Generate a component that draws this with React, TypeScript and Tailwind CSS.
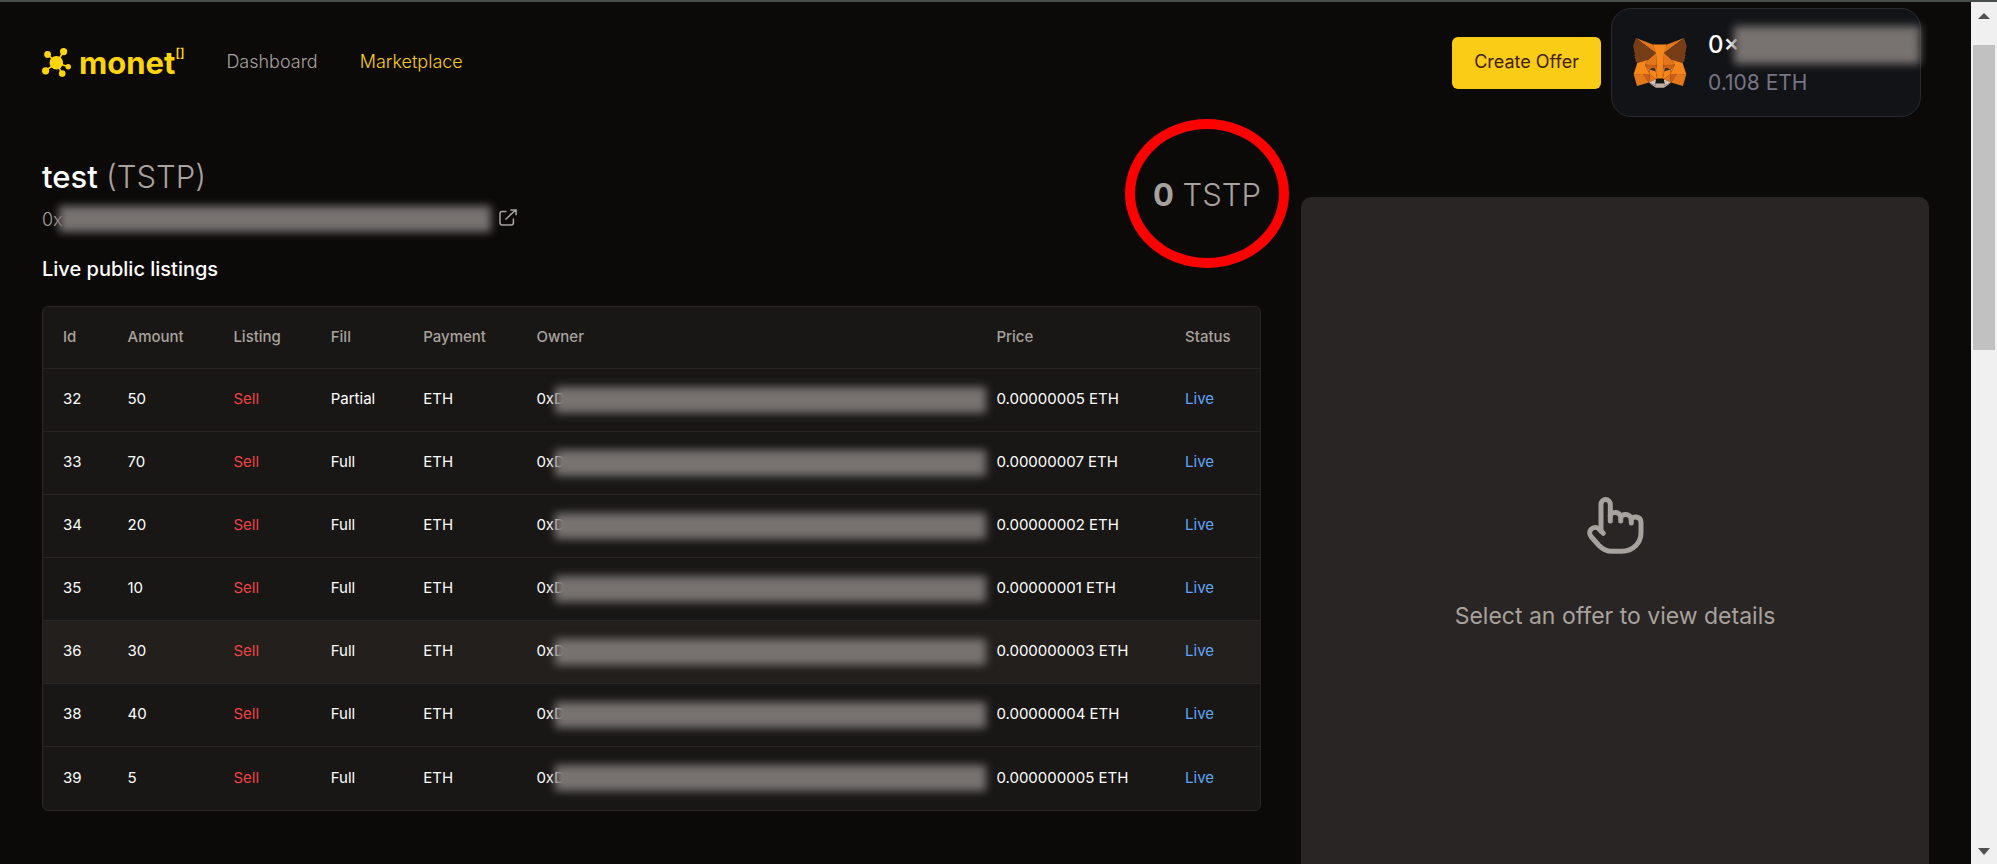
import React from "react";

type Offer = {
  id: number;
  amount: number;
  fill: "Partial" | "Full";
  price: string;
  active?: boolean;
};

const offers: Offer[] = [
  { id: 32, amount: 50, fill: "Partial", price: "0.00000005 ETH" },
  { id: 33, amount: 70, fill: "Full", price: "0.00000007 ETH" },
  { id: 34, amount: 20, fill: "Full", price: "0.00000002 ETH" },
  { id: 35, amount: 10, fill: "Full", price: "0.00000001 ETH" },
  { id: 36, amount: 30, fill: "Full", price: "0.000000003 ETH", active: true },
  { id: 38, amount: 40, fill: "Full", price: "0.00000004 ETH" },
  { id: 39, amount: 5, fill: "Full", price: "0.000000005 ETH" },
];

const foxShapes: [string, string][] = [
  ["#e2761b", "274.1 35.5 174.6 109.4 193 65.8"],
  ["#e4761b", "44.4 35.5 143.1 110.1 125.6 65.8"],
  ["#e4761b", "238.3 206.8 211.8 247.4 268.5 263 284.8 207.7"],
  ["#e4761b", "33.9 207.7 50.1 263 106.8 247.4 80.3 206.8"],
  ["#e4761b", "103.6 138.2 87.8 162.1 144.1 164.6 142.1 104.1"],
  ["#e4761b", "214.9 138.2 175.9 103.4 174.6 164.6 230.8 162.1"],
  ["#e4761b", "106.8 247.4 140.6 230.9 111.4 208.1"],
  ["#e4761b", "177.9 230.9 211.8 247.4 207.1 208.1"],
  ["#d7c1b3", "211.8 247.4 177.9 230.9 180.6 253 180.3 262.3"],
  ["#d7c1b3", "106.8 247.4 138.3 262.3 138.1 253 140.6 230.9"],
  ["#cd6116", "106.8 247.4 111.6 206.8 80.3 207.7"],
  ["#cd6116", "207 206.8 211.8 247.4 238.3 207.7"],
  ["#cd6116", "230.8 162.1 174.6 164.6 179.8 193.5 188.1 176.1 208.1 185.2"],
  ["#cd6116", "110.6 185.2 130.6 176.1 138.8 193.5 144.1 164.6 87.8 162.1"],
  ["#233447", "138.8 193.5 110.6 185.2 130.5 176.1"],
  ["#233447", "179.7 193.5 188 176.1 208 185.2"],
  ["#e4751f", "87.8 162.1 111.4 208.1 110.6 185.2"],
  ["#e4751f", "208.1 185.2 207.1 208.1 230.8 162.1"],
  ["#e4751f", "144.1 164.6 138.8 193.5 145.4 227.6 146.9 182.7"],
  ["#e4751f", "174.6 164.6 171.9 182.6 173.1 227.6 179.8 193.5"],
  ["#f6851b", "179.8 193.5 173.1 227.6 177.9 230.9 207.1 208.1 208.1 185.2"],
  ["#f6851b", "110.6 185.2 111.4 208.1 140.6 230.9 145.4 227.6 138.8 193.5"],
  ["#c0ad9e", "180.3 262.3 180.6 253 178.1 250.8 140.4 250.8 138.1 253 138.3 262.3 106.8 247.4 117.8 256.4 140.1 271.9 178.4 271.9 200.8 256.4 211.8 247.4"],
  ["#161616", "177.9 230.9 173.1 227.6 145.4 227.6 140.6 230.9 138.1 253 140.4 250.8 178.1 250.8 180.6 253"],
  ["#763d16", "278.3 114.2 286.8 73.4 274.1 35.5 177.9 106.9 214.9 138.2 267.2 153.5 278.8 140 273.8 136.4 281.8 129.1 275.6 124.3 283.6 118.2"],
  ["#763d16", "31.8 73.4 40.3 114.2 34.9 118.2 42.9 124.3 36.8 129.1 44.8 136.4 39.8 140 51.3 153.5 103.6 138.2 140.6 106.9 44.4 35.5"],
  ["#f6851b", "267.2 153.5 214.9 138.2 230.8 162.1 207.1 208.1 238.3 207.7 284.8 207.7"],
  ["#f6851b", "103.6 138.2 51.3 153.5 33.9 207.7 80.3 207.7 111.4 208.1 87.8 162.1"],
  ["#f6851b", "174.6 164.6 177.9 106.9 193.1 65.8 125.6 65.8 140.6 106.9 144.1 164.6 145.3 182.8 145.4 227.6 173.1 227.6 173.3 182.8"],
];

function FoxIcon() {
  return (
    <svg viewBox="31 35 257 238" className="h-[50px] w-[54px] shrink-0" aria-hidden="true">
      {foxShapes.map(([fill, points], i) => (
        <polygon key={i} fill={fill} points={points} />
      ))}
    </svg>
  );
}

function LogoMark() {
  return (
    <svg viewBox="0 0 29 29" className="size-[29px]" fill="#ffd60a" stroke="#ffd60a" aria-hidden="true">
      <g strokeWidth="1.6">
        <path d="M14.5 15 5.5 6.2M14.5 15 21.5 3.5M14.5 15 26.5 18.7M14.5 15 20 25.7M14.5 15 3.5 22.7" />
      </g>
      <g stroke="none">
        <circle cx="14.3" cy="14.7" r="6.8" />
        <circle cx="5.6" cy="6.4" r="3.4" />
        <circle cx="21.6" cy="3.6" r="3.6" />
        <circle cx="26.2" cy="18.7" r="2.7" />
        <circle cx="20.2" cy="25.6" r="3.3" />
        <circle cx="3.6" cy="22.8" r="3.6" />
      </g>
    </svg>
  );
}

function ExternalIcon() {
  return (
    <svg viewBox="0 0 18 17" className="h-[17px] w-[18px]" fill="none" stroke="currentColor" strokeWidth="1.5" aria-hidden="true">
      <path d="M7.5 2.6H3.2A2.2 2.2 0 0 0 1 4.800v9A2.200 2.200 0 0 0 3.200 16h9a2.200 2.200 0 0 0 2.200-2.200V9.500M6.500 10.500 16.600 1M11.300 .9h5.800v5.400" />
    </svg>
  );
}

function HandIcon() {
  return (
    <svg viewBox="0 0 57 57" className="size-[57px]" fill="none" stroke="currentColor" strokeWidth="5" strokeLinecap="round" strokeLinejoin="round" aria-hidden="true">
      <path d="M23.300 24V7.200a4.650 4.650 0 0 0-9.300 0V34" />
      <path d="M16.300 36.300 11.800 31.800A5.500 5.500 0 0 0 4 39.500L12 48.500Q17.500 54.300 25 54.300H35C46 54.300 54 46 54 35.500V25.500C54 19 45 18.500 44.300 22.500" />
      <path d="M23.300 19C24 14 33.700 14 33.700 20.500V24M33.700 21.500C34 15.500 44.300 16.500 44.300 23V26" />
    </svg>
  );
}

function Scrollbar() {
  return (
    <div className="flex w-[26px] shrink-0 flex-col items-center bg-[#f0f0f0]" aria-hidden="true">
      <div className="flex h-[43px] items-start pt-[11px]">
        <svg viewBox="0 0 12 6" className="h-[6px] w-[12px]" fill="#505050"><path d="M0 6 6 0l6 6z" /></svg>
      </div>
      <div className="h-[305px] w-[22px] bg-[#c1c1c1]" />
      <div className="mt-auto pb-[9px]">
        <svg viewBox="0 0 12 7" className="h-[7px] w-[12px]" fill="#505050"><path d="M0 0h12L6 7z" /></svg>
      </div>
    </div>
  );
}

export default function App() {
  return (
    <div className="flex h-screen flex-col overflow-hidden bg-[#0c0a09] font-['Inter',sans-serif] text-white">
      <div className="h-[2px] shrink-0 bg-[#494d4c]" />
      <div className="flex min-h-0 flex-1">
        <div className="min-w-0 flex-1 overflow-hidden">
          <header className="flex items-center pt-1.5 pr-[50px] pl-[42px]">
            <a href="#home" className="flex items-center gap-2 text-[#ffd60a]">
              <LogoMark />
              <span className="flex text-[31px] leading-8 font-bold">
                monet
                <span className="text-[12px] leading-3 font-semibold">[]</span>
              </span>
            </a>
            <nav className="ml-[42px] flex gap-[42px] pb-0.5 text-[18px] leading-7 font-light">
              <a href="#dashboard" className="text-[#a8a29e]">Dashboard</a>
              <a href="#marketplace" className="text-[#facc15]">Marketplace</a>
            </nav>
            <button type="button" className="ml-auto h-[52px] rounded-md bg-[#facc15] px-[22px] pb-0.5 text-[18px] text-[#422006]">
              Create Offer
            </button>
            <div className="ml-2.5 flex h-[109px] w-[310px] items-center rounded-[20px] border border-[#292a30] bg-[#121317] pl-[21px]">
              <FoxIcon />
              <div className="ml-[21px] min-w-0 flex-1 pt-0.5">
                <div className="flex items-center text-[24px] leading-[38px] font-medium">
                  <span>0×</span>
                  <span className="-ml-1.5 h-[38px] flex-1 bg-[#787371] blur-[4px]" />
                </div>
                <div className="text-[21px] leading-[38px] text-[#777584]">0.108 ETH</div>
              </div>
            </div>
          </header>

          <main className="grid grid-cols-[66fr_34fr] items-start gap-10 px-[42px]">
            <section className="min-w-0 pt-10">
              <div className="flex items-center justify-between">
                <div>
                  <h1 className="text-[31px] leading-10 font-medium">
                    test <span className="font-light text-[#a8a29e]">(TSTP)</span>
                  </h1>
                  <div className="mt-2 flex h-7 items-center text-[18px] font-light text-[#a8a29e]">
                    <span>0x</span>
                    <span className="-ml-1 h-[26px] w-[432px] bg-[#787371] blur-[4px]" />
                    <a href="#explorer" aria-label="Open in explorer" className="ml-2 self-start pt-1">
                      <ExternalIcon />
                    </a>
                  </div>
                </div>
                <div className="relative text-[31px] leading-10 text-[#a8a29e]">
                  <span className="font-bold">0</span> <span className="font-light">TSTP</span>
                  <span className="absolute -inset-x-7 -top-14 h-[149px] rounded-[50%] border-[10px] border-[#ff0000]" />
                </div>
              </div>
              <h2 className="mt-[22px] text-[20px] leading-7 font-medium">Live public listings</h2>

              <div className="mt-[23px] overflow-hidden rounded-md border border-[#292524] bg-[#181715]">
                <table className="w-full table-fixed border-collapse text-left text-[15px] [&_td]:pl-5 [&_th]:pl-5">
                  <colgroup>
                    <col className="w-[5.3%]" />
                    <col className="w-[8.7%]" />
                    <col className="w-[8%]" />
                    <col className="w-[7.6%]" />
                    <col className="w-[9.3%]" />
                    <col className="w-[37.8%]" />
                    <col className="w-[15.5%]" />
                    <col />
                  </colgroup>
                  <thead className="text-[#a8a29e] [&_th]:font-medium">
                    <tr className="h-[61px] border-b border-[#292524]">
                      <th>Id</th>
                      <th>Amount</th>
                      <th>Listing</th>
                      <th>Fill</th>
                      <th>Payment</th>
                      <th>Owner</th>
                      <th>Price</th>
                      <th>Status</th>
                    </tr>
                  </thead>
                  <tbody className="whitespace-nowrap">
                    {offers.map((o) => (
                      <tr
                        key={o.id}
                        className={`h-[63px] border-b border-[#292524] last:h-16 last:border-b-0 ${o.active ? "bg-[#231f1c]" : ""}`}
                      >
                        <td>{o.id}</td>
                        <td>{o.amount}</td>
                        <td className="text-[#ef4444]">Sell</td>
                        <td>{o.fill}</td>
                        <td>ETH</td>
                        <td>
                          <div className="flex items-center">
                            <span>0xD</span>
                            <span className="-mr-2.5 -ml-2.5 h-[26px] flex-1 bg-[#787371] blur-[4px]" />
                          </div>
                        </td>
                        <td>{o.price}</td>
                        <td className="text-[#60a5fa]">Live</td>
                      </tr>
                    ))}
                  </tbody>
                </table>
              </div>
            </section>

            <aside className="mt-20 flex h-[85vh] flex-col items-center justify-center gap-[46px] rounded-[10px] bg-[#292524] text-[#a8a29e]">
              <HandIcon />
              <p className="text-[23px] leading-8">Select an offer to view details</p>
            </aside>
          </main>
        </div>
        <Scrollbar />
      </div>
    </div>
  );
}
